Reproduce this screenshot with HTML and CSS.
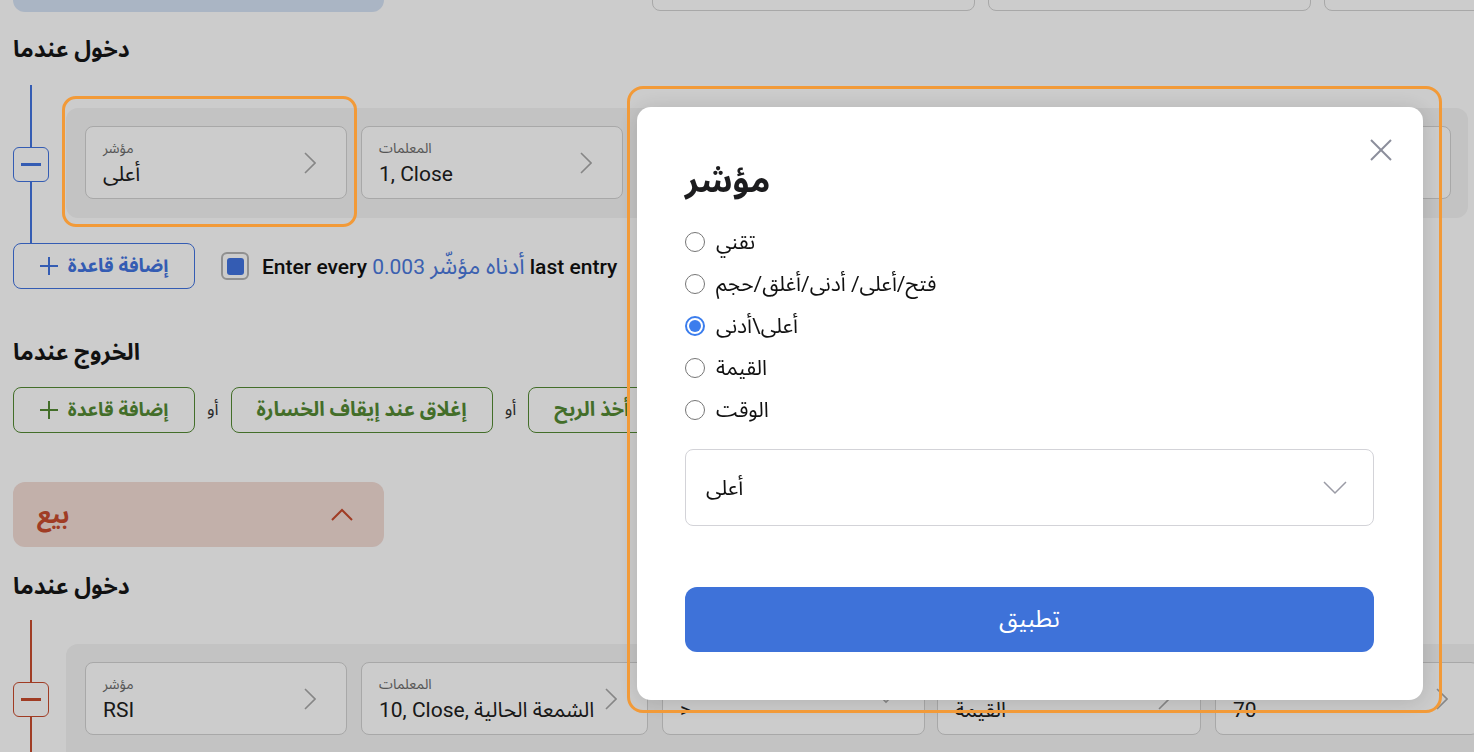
FILE: index.html
```html
<!DOCTYPE html>
<html lang="ar">
<head>
<meta charset="utf-8">
<title>Strategy rules</title>
<link rel="stylesheet" href="styles.css">
</head>
<body>
<div class="page">
  <div class="top-row">
    <div class="side-header buy"></div>
    <div class="top-fields">
      <div class="field top-field"></div>
      <div class="field top-field"></div>
      <div class="field top-field"></div>
    </div>
  </div>

  <h2 class="section-title title-entry-buy">دخول عندما</h2>
  <div class="rule-block blue">
    <div class="rail">
      <span class="rail-line"></span>
      <button class="remove-btn" type="button"><span class="minus"></span></button>
      <span class="rail-line"></span>
    </div>
    <div class="rule">
      <div class="field w262">
        <div class="field-text"><span class="field-label">مؤشر</span><span class="field-value">أعلى</span></div>
        <svg class="chev-right" viewBox="0 0 12 22"><polyline points="1,1 11,11 1,21"/></svg>
      </div>
      <div class="field w262">
        <div class="field-text"><span class="field-label">المعلمات</span><span class="field-value">1, Close</span></div>
        <svg class="chev-right" viewBox="0 0 12 22"><polyline points="1,1 11,11 1,21"/></svg>
      </div>
      <div class="field w262">
        <svg class="chev-down" viewBox="0 0 16 10"><polyline points="1,1 8,8 15,1"/></svg>
      </div>
      <div class="field w262">
        <svg class="chev-right" viewBox="0 0 12 22"><polyline points="1,1 11,11 1,21"/></svg>
      </div>
      <div class="field w262">
        <svg class="chev-right" viewBox="0 0 12 22"><polyline points="1,1 11,11 1,21"/></svg>
      </div>
    </div>
  </div>

  <div class="actions">
    <button class="add-btn add-blue" type="button">
      <svg class="plus" viewBox="0 0 18 18"><line x1="9" y1="0" x2="9" y2="18"/><line x1="0" y1="9" x2="18" y2="9"/></svg>
      <span>إضافة قاعدة</span>
    </button>
    <span class="checkbox"><span class="checkbox-fill"></span></span>
    <span class="entry-text">Enter every <span class="link">0.003</span> <bdi class="link link-ar">أدناه مؤشّر</bdi> last entry</span>
  </div>

  <h2 class="section-title title-exit">الخروج عندما</h2>
  <div class="exit-row">
    <button class="add-btn add-green" type="button">
      <svg class="plus" viewBox="0 0 18 18"><line x1="9" y1="0" x2="9" y2="18"/><line x1="0" y1="9" x2="18" y2="9"/></svg>
      <span>إضافة قاعدة</span>
    </button>
    <span class="or">أو</span>
    <button class="rule-btn" type="button">إغلاق عند إيقاف الخسارة</button>
    <span class="or">أو</span>
    <button class="rule-btn" type="button">أخذ الربح</button>
  </div>

  <div class="side-header sell">
    <span class="sell-title">بيع</span>
    <svg class="chev-up" viewBox="0 0 22 13"><polyline points="1,12 11,2 21,12"/></svg>
  </div>

  <h2 class="section-title title-entry-sell">دخول عندما</h2>
  <div class="rule-block red">
    <div class="rail">
      <span class="rail-line short"></span>
      <button class="remove-btn" type="button"><span class="minus"></span></button>
      <span class="rail-line"></span>
    </div>
    <div class="rule rule-open">
      <div class="field w262">
        <div class="field-text"><span class="field-label">مؤشر</span><span class="field-value">RSI</span></div>
        <svg class="chev-right" viewBox="0 0 12 22"><polyline points="1,1 11,11 1,21"/></svg>
      </div>
      <div class="field w287">
        <div class="field-text"><span class="field-label">المعلمات</span><span class="field-value">10, Close, الشمعة الحالية</span></div>
        <svg class="chev-right" viewBox="0 0 12 22"><polyline points="1,1 11,11 1,21"/></svg>
      </div>
      <div class="field w263">
        <div class="field-text"><span class="field-label">الشرط</span><span class="field-value">&gt;</span></div>
        <svg class="chev-down" viewBox="0 0 16 10"><polyline points="1,1 8,8 15,1"/></svg>
      </div>
      <div class="field w264">
        <div class="field-text"><span class="field-label">النوع</span><span class="field-value">القيمة</span></div>
        <svg class="chev-right" viewBox="0 0 12 22"><polyline points="1,1 11,11 1,21"/></svg>
      </div>
      <div class="field w264">
        <div class="field-text"><span class="field-label">القيمة</span><span class="field-value">70</span></div>
        <svg class="chev-right" viewBox="0 0 12 22"><polyline points="1,1 11,11 1,21"/></svg>
      </div>
    </div>
  </div>
</div>

<div class="overlay"></div>

<div class="modal" role="dialog">
  <button class="modal-close" type="button" aria-label="close">
    <svg viewBox="0 0 24 24"><line x1="2" y1="2" x2="22" y2="22"/><line x1="22" y1="2" x2="2" y2="22"/></svg>
  </button>
  <h3 class="modal-title">مؤشر</h3>
  <div class="radio-list">
    <label class="radio-row"><span class="radio"></span><span class="radio-label">تقني</span></label>
    <label class="radio-row"><span class="radio"></span><span class="radio-label">فتح/أعلى/ أدنى/أغلق/حجم</span></label>
    <label class="radio-row"><span class="radio checked"></span><span class="radio-label">أعلى\أدنى</span></label>
    <label class="radio-row"><span class="radio"></span><span class="radio-label">القيمة</span></label>
    <label class="radio-row"><span class="radio"></span><span class="radio-label">الوقت</span></label>
  </div>
  <div class="select">
    <span class="select-value">أعلى</span>
    <svg class="select-chev" viewBox="0 0 24 14"><polyline points="1,1 12,12 23,1"/></svg>
  </div>
  <button class="apply" type="button">تطبيق</button>
</div>

<div class="highlight hl-field"></div>
<div class="highlight hl-modal"></div>
</body>
</html>
```

FILE: styles.css
```css
* { box-sizing: border-box; }

html, body {
  margin: 0;
  height: 100%;
  overflow: hidden;
}

body {
  font-family: Roboto, "Noto Sans Arabic", "DejaVu Sans", sans-serif;
  color: #202020;
  background: #ffffff;
}

button {
  font-family: inherit;
  cursor: pointer;
}

.page {
  width: 1474px;
  padding-left: 13px;
}

/* ---------- top partial row ---------- */
.top-row {
  display: flex;
  align-items: flex-start;
  margin-top: -50px;
  height: 62px;
}

.side-header {
  width: 371px;
  border-radius: 12px;
  display: flex;
  align-items: center;
  justify-content: space-between;
  flex: none;
}

.buy {
  height: 62px;
  background: #d5e3f5;
}

.top-fields {
  display: flex;
  gap: 13px;
  margin-left: 268px;
}

.top-field {
  width: 323px;
  height: 61px;
}

/* ---------- headings ---------- */
.section-title {
  font-size: 23px;
  font-weight: 700;
  line-height: 28px;
  margin: 0;
  color: #161616;
}

.title-entry-buy { margin-top: 24px; }
.title-exit { margin-top: 50px; }
.title-entry-sell { margin-top: 26px; }

/* ---------- rule block ---------- */
.rule-block {
  display: flex;
  height: 158px;
}

.blue { --accent: #4173e0; margin-top: 21px; }
.red { --accent: #c84b2e; margin-top: 19px; height: 200px; }

.rail {
  width: 36px;
  flex: none;
  display: flex;
  flex-direction: column;
  align-items: center;
}

.rail-line {
  width: 2px;
  flex: 1;
  background: var(--accent);
}

.rail-line.short {
  flex: none;
  height: 62px;
}

.remove-btn {
  width: 36px;
  height: 35px;
  flex: none;
  border: 1px solid var(--accent);
  border-radius: 6px;
  background: #ffffff;
  display: flex;
  align-items: center;
  justify-content: center;
  padding: 0;
}

.minus {
  width: 20px;
  height: 3px;
  background: var(--accent);
}

.rule {
  margin: 23px 0 25px 17px;
  background: #f4f4f4;
  border-radius: 12px;
  display: flex;
  gap: 14px;
  padding: 18px 17px 19px 19px;
}

.rule-open {
  margin: 24px 0 0 17px;
  height: 130px;
  align-items: flex-start;
}

.rule-open .w263 { margin-right: -2px; }
.rule-open .w264:first-of-type { margin-right: -2px; }

/* ---------- field card ---------- */
.field {
  border: 1px solid #d2d2d2;
  border-radius: 8px;
  background: #ffffff;
  display: flex;
  align-items: center;
  justify-content: space-between;
  padding: 0 30px 0 17px;
  flex: none;
  height: 73px;
}

.field > svg:only-child { margin-left: auto; }

.top-field { height: 61px; }

.w262 { width: 262px; }
.w263 { width: 263px; }
.w264 { width: 264px; }
.w287 { width: 287px; }

.field-text {
  display: flex;
  flex-direction: column;
  gap: 5px;
  min-width: 0;
}

.field-label {
  font-size: 14px;
  line-height: 17px;
  color: #6b6b6b;
}

.field-value {
  font-size: 21px;
  line-height: 24px;
  color: #202020;
  white-space: nowrap;
}

.chev-right {
  width: 12px;
  height: 22px;
  flex: none;
  fill: none;
  stroke: #a8a8a8;
  stroke-width: 1.6;
}

.chev-down {
  width: 16px;
  height: 10px;
  flex: none;
  fill: none;
  stroke: #a8a8a8;
  stroke-width: 1.6;
}

/* ---------- action rows ---------- */
.actions {
  display: flex;
  align-items: center;
  height: 46px;
}

.add-btn {
  width: 182px;
  height: 46px;
  flex: none;
  border: 1px solid currentColor;
  border-radius: 8px;
  background: #ffffff;
  display: flex;
  align-items: center;
  justify-content: center;
  gap: 10px;
  font-size: 19px;
  font-weight: 700;
  padding: 0;
}

.add-blue { color: #4173e0; }
.add-green { color: #548a34; }

.plus {
  width: 18px;
  height: 18px;
  stroke: currentColor;
  stroke-width: 2;
}

.checkbox {
  width: 28px;
  height: 28px;
  margin-left: 26px;
  border: 2px solid #b4b4b4;
  border-radius: 6px;
  display: flex;
  align-items: center;
  justify-content: center;
  flex: none;
}

.checkbox-fill {
  width: 17px;
  height: 17px;
  border-radius: 3px;
  background: #4173e0;
}

.entry-text {
  margin-left: 13px;
  font-size: 21px;
  font-weight: 500;
  color: #111111;
  white-space: nowrap;
}

.link {
  color: #4a78dc;
  font-weight: 400;
}

.link-ar {
  font-size: 23px;
}

.exit-row {
  display: flex;
  align-items: center;
  gap: 12px;
  margin-top: 20px;
  height: 46px;
}

.or {
  font-size: 17px;
  color: #333333;
}

.rule-btn {
  height: 46px;
  flex: none;
  border: 1px solid #548a34;
  border-radius: 8px;
  background: #ffffff;
  color: #548a34;
  font-size: 20px;
  font-weight: 700;
  padding: 0 25px;
  white-space: nowrap;
}

/* ---------- sell header ---------- */
.sell {
  margin-top: 49px;
  height: 65px;
  background: #f3dcd5;
  padding: 0 31px 0 24px;
}

.sell-title {
  font-size: 25px;
  font-weight: 700;
  color: #c84b2e;
}

.chev-up {
  width: 22px;
  height: 13px;
  fill: none;
  stroke: #c84b2e;
  stroke-width: 2;
}

/* ---------- overlay & modal ---------- */
.overlay {
  position: fixed;
  inset: 0;
  background: rgba(0, 0, 0, 0.2);
  z-index: 10;
}

.modal {
  position: fixed;
  left: 637px;
  top: 107px;
  width: 786px;
  height: 593px;
  background: #ffffff;
  border-radius: 14px;
  box-shadow: 0 2px 22px rgba(0, 0, 0, 0.14);
  z-index: 20;
  padding: 53px 49px 48px 48px;
  display: flex;
  flex-direction: column;
}

.modal-close {
  position: absolute;
  top: 31px;
  right: 30px;
  width: 24px;
  height: 24px;
  padding: 0;
  border: 0;
  background: transparent;
}

.modal-close svg {
  width: 24px;
  height: 24px;
  stroke: #8b8e9b;
  stroke-width: 2;
  display: block;
}

.modal-title {
  margin: 0;
  font-size: 34px;
  font-weight: 700;
  line-height: 40px;
  color: #1c1c1e;
}

.radio-list {
  margin-top: 21px;
  display: flex;
  flex-direction: column;
}

.radio-row {
  height: 42px;
  display: flex;
  align-items: center;
  gap: 11px;
}

.radio {
  width: 20px;
  height: 20px;
  border-radius: 50%;
  border: 1.5px solid #767676;
  flex: none;
  display: flex;
  align-items: center;
  justify-content: center;
}

.radio.checked {
  border: 2px solid #3b7ded;
}

.radio.checked::after {
  content: "";
  width: 12px;
  height: 12px;
  border-radius: 50%;
  background: #3b7ded;
}

.radio-label {
  font-size: 21px;
  line-height: 26px;
  color: #111111;
}

.select {
  margin-top: 18px;
  height: 77px;
  flex: none;
  border: 1px solid #d3d3d8;
  border-radius: 8px;
  display: flex;
  align-items: center;
  justify-content: space-between;
  padding: 0 26px 0 20px;
}

.select-value {
  font-size: 21px;
  color: #111111;
}

.select-chev {
  width: 24px;
  height: 14px;
  fill: none;
  stroke: #9a9ba5;
  stroke-width: 1.5;
}

.apply {
  margin-top: 61px;
  height: 65px;
  flex: none;
  border: 0;
  border-radius: 12px;
  background: #3e72d9;
  color: #ffffff;
  font-size: 24px;
}

/* ---------- annotation highlights ---------- */
.highlight {
  position: absolute;
  border: 3px solid #f29a38;
  border-radius: 16px;
  pointer-events: none;
  z-index: 30;
}

.hl-field {
  left: 62px;
  top: 96px;
  width: 295px;
  height: 131px;
  border-radius: 14px;
}

.hl-modal {
  left: 627px;
  top: 86px;
  width: 815px;
  height: 627px;
}
```
